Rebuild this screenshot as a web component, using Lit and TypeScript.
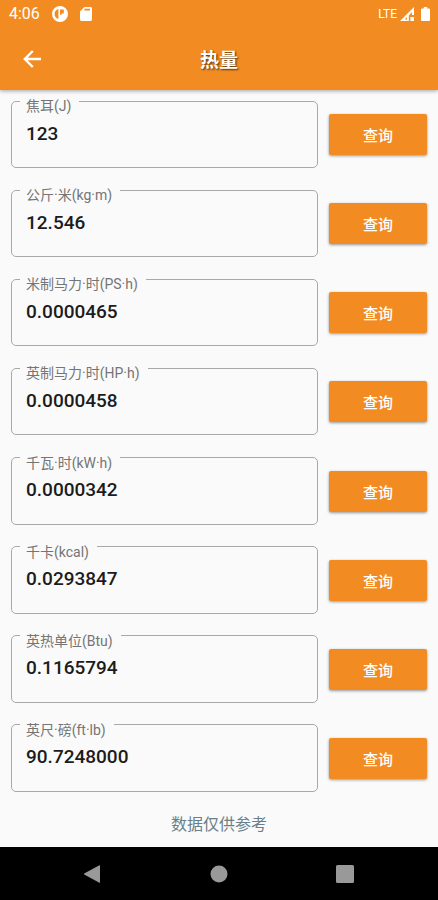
import { LitElement, html, css } from "lit";
import { customElement, property, state } from "lit/decorators.js";

interface Unit {
  id: string;
  label: string;
  value: string;
}

const UNITS: Unit[] = [
  { id: "joule", label: "焦耳(J)", value: "123" },
  { id: "kgm", label: "公斤·米(kg·m)", value: "12.546" },
  { id: "psh", label: "米制马力·时(PS·h)", value: "0.0000465" },
  { id: "hph", label: "英制马力·时(HP·h)", value: "0.0000458" },
  { id: "kwh", label: "千瓦·时(kW·h)", value: "0.0000342" },
  { id: "kcal", label: "千卡(kcal)", value: "0.0293847" },
  { id: "btu", label: "英热单位(Btu)", value: "0.1165794" },
  { id: "ftlb", label: "英尺·磅(ft·lb)", value: "90.7248000" },
];

@customElement("status-bar")
class StatusBar extends LitElement {
  static styles = css`
    :host {
      display: flex;
      align-items: center;
      justify-content: space-between;
      height: 28px;
      padding: 0 8px 0 9px;
      color: #fff;
    }
    .group {
      display: flex;
      align-items: center;
    }
    .left {
      gap: 12px;
    }
    .right {
      gap: 3px;
    }
    .time {
      font-size: 16px;
      line-height: 28px;
    }
    .net {
      font-size: 12px;
      line-height: 28px;
    }
    .battery {
      margin-left: 4px;
    }
    svg {
      display: block;
      fill: #fff;
    }
  `;

  render() {
    return html`
      <div class="group left">
        <span class="time">4:06</span>
        <svg width="16" height="16" viewBox="0 0 16 16" aria-hidden="true">
          <path
            fill-rule="evenodd"
            d="M8 0a8 8 0 1 1 0 16A8 8 0 0 1 8 0ZM6.400 3C3.800 3.800 2.600 5.600 2.600 8s1.200 4.200 3.800 5ZM8 3.400V8.800H9.600V7.400H11.800V3.400Z"
          />
        </svg>
        <svg width="12" height="14" viewBox="0 0 12 14" aria-hidden="true">
          <path
            fill-rule="evenodd"
            d="M4.400 0H10.600Q12 0 12 1.400V12.600Q12 14 10.600 14H1.400Q0 14 0 12.600V4.400ZM4.400 1.800V3.400H10V1.800Z"
          />
        </svg>
      </div>
      <div class="group right">
        <span class="net">LTE</span>
        <svg width="14" height="14" viewBox="0 0 14 14" aria-hidden="true">
          <path
            fill-rule="evenodd"
            d="M14 0V8H12V5.200L8.800 8.400V14H0ZM4.600 12.400H7V10ZM10.400 10H14V14H10.400Z"
          />
        </svg>
        <svg class="battery" width="9" height="14" viewBox="0 0 9 14" aria-hidden="true">
          <path d="M2.800 0H6.200V1.400H8Q9 1.400 9 2.400V13Q9 14 8 14H1Q0 14 0 13V2.400Q0 1.400 1 1.400H2.800Z" />
        </svg>
      </div>
    `;
  }
}

@customElement("app-bar")
class AppBar extends LitElement {
  static styles = css`
    :host {
      display: grid;
      grid-template-columns: 64px 1fr 64px;
      align-items: center;
      height: 62px;
      color: #fff;
    }
    .back {
      display: flex;
      align-items: center;
      justify-content: center;
      width: 64px;
      height: 48px;
      padding: 0;
      border: 0;
      background: none;
      color: inherit;
      cursor: pointer;
    }
    svg {
      fill: none;
      stroke: currentColor;
      stroke-width: 2.4;
    }
    .title {
      margin: 0;
      padding-top: 4px;
      font-size: 19px;
      line-height: 28px;
      font-weight: 700;
      text-align: center;
      text-shadow: 1px 1px 2px rgba(0, 0, 0, 0.7);
    }
  `;

  @property() heading = "";

  render() {
    return html`
      <button class="back" type="button" aria-label="返回">
        <svg width="18" height="18" viewBox="0 0 18 18" aria-hidden="true">
          <path d="M18 9H2M9.800 1L1.800 9l8 8" />
        </svg>
      </button>
      <h1 class="title">${this.heading}</h1>
    `;
  }
}

@customElement("unit-row")
class UnitRow extends LitElement {
  static styles = css`
    :host {
      display: grid;
      grid-template-columns: minmax(0, 1fr) 98px;
      column-gap: 11px;
      align-items: start;
    }
    .field {
      box-sizing: border-box;
      min-width: 0;
      height: 81px;
      margin: 0;
      padding: 0 8px;
      border: 1px solid #a9a9a9;
      border-radius: 5px;
    }
    /* The padding above the caption lets it hang below the outline. */
    .caption {
      padding: 10px 8px 0 6px;
      font-size: 14px;
      line-height: 18px;
      color: #757575;
    }
    .value {
      display: block;
      box-sizing: border-box;
      width: 100%;
      height: 36px;
      padding: 0 6px;
      border: 0;
      outline: 0;
      background: none;
      font: inherit;
      font-size: 19px;
      font-weight: 500;
      color: #1c1c1c;
    }
    .query {
      height: 41px;
      margin-top: 27px;
      padding: 0;
      border: 0;
      border-radius: 2px;
      background: #f28c22;
      box-shadow: 0 1px 3px rgba(0, 0, 0, 0.4);
      font: inherit;
      font-size: 15px;
      font-weight: 500;
      color: #fff;
      cursor: pointer;
    }
  `;

  @property({ attribute: false }) unit!: Unit;

  render() {
    const { id, label, value } = this.unit;
    return html`
      <fieldset class="field">
        <legend class="caption"><label for=${id}>${label}</label></legend>
        <input class="value" id=${id} type="text" inputmode="decimal" .value=${value} />
      </fieldset>
      <button class="query" type="button">查询</button>
    `;
  }
}

@customElement("nav-bar")
class NavBar extends LitElement {
  static styles = css`
    :host {
      display: flex;
      align-items: center;
      justify-content: center;
      height: 53px;
      background: #000;
    }
    .key {
      display: flex;
      align-items: center;
      justify-content: center;
      width: 24px;
      height: 48px;
      padding: 0;
      border: 0;
      background: none;
      cursor: pointer;
    }
    .keys {
      display: flex;
      justify-content: center;
      gap: 102px;
    }
    svg {
      fill: #999;
    }
  `;

  render() {
    return html`
      <nav class="keys">
        <button class="key" type="button" aria-label="返回">
          <svg width="18" height="18" viewBox="0 0 18 18" aria-hidden="true">
            <path d="M15.400 0.200Q16 0 16 .8V17.200Q16 18 15.400 17.800L0.200 9.500Q-.4 9 .2 8.500Z" />
          </svg>
        </button>
        <button class="key" type="button" aria-label="主页">
          <svg width="18" height="18" viewBox="0 0 18 18" aria-hidden="true">
            <circle cx="9" cy="9" r="8.500" />
          </svg>
        </button>
        <button class="key" type="button" aria-label="最近任务">
          <svg width="18" height="18" viewBox="0 0 18 18" aria-hidden="true">
            <rect width="18" height="18" rx="1.500" />
          </svg>
        </button>
      </nav>
    `;
  }
}

@customElement("app-root")
class AppRoot extends LitElement {
  static styles = css`
    :host {
      display: flex;
      flex-direction: column;
      min-height: 100vh;
      background: #fafafa;
      font-family: Roboto, "Noto Sans CJK SC", sans-serif;
    }
    .header {
      background: #f28c22;
      box-shadow: 0 1px 4px rgba(0, 0, 0, 0.35);
    }
    .content {
      flex: 1;
      display: flex;
      flex-direction: column;
      justify-content: space-between;
      gap: 8px;
      margin-top: -3px;
      padding: 0 11px;
    }
    .note {
      margin: 0;
      padding: 21px 0 10px;
      font-size: 16px;
      line-height: 24px;
      text-align: center;
      color: #6b7f88;
    }
  `;

  @state() private units = UNITS;

  render() {
    return html`
      <header class="header">
        <status-bar></status-bar>
        <app-bar heading="热量"></app-bar>
      </header>
      <main class="content">${this.units.map((unit) => html`<unit-row .unit=${unit}></unit-row>`)}</main>
      <p class="note">数据仅供参考</p>
      <nav-bar></nav-bar>
    `;
  }
}
